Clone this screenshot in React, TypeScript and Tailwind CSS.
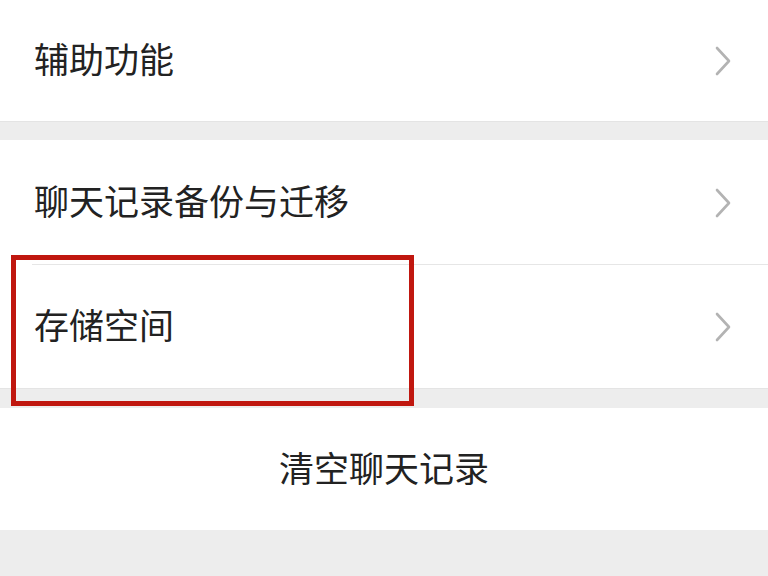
function Chevron() {
  return (
    <svg width="16" height="30" viewBox="0 0 16 30" fill="none" className="shrink-0">
      <path d="M2 2 L14 15 L2 28" stroke="#b3b3b3" strokeWidth="2.6" strokeLinecap="round" strokeLinejoin="round" />
    </svg>
  );
}

function Row({ label, h, divider }: { label: string; h: string; divider?: boolean }) {
  return (
    <div className={`relative flex items-center justify-between bg-white pl-[34px] pr-[37px] ${h}`}>
      <span className="mb-[6px] text-[35px] leading-none text-[#222]">{label}</span>
      <Chevron />
      {divider && <div className="absolute bottom-0 left-[32px] right-0 h-px bg-[#e6e6e6]" />}
    </div>
  );
}

export default function App() {
  return (
    <div
      className="relative w-[768px] h-[576px] overflow-hidden bg-[#ededed]"
      style={{ fontFamily: '"Noto Sans CJK SC", "Noto Sans", sans-serif' }}
    >
      <Row label="辅助功能" h="h-[121px]" />
      <div className="h-[19px] border-t border-[#e4e4e4]" />
      <Row label="聊天记录备份与迁移" h="h-[125px]" divider />
      <Row label="存储空间" h="h-[123px]" />
      <div className="h-[20px] border-t border-[#e4e4e4]" />
      <div className="flex h-[122px] items-center justify-center bg-white">
        <span className="mb-[6px] text-[35px] leading-none text-[#222]">清空聊天记录</span>
      </div>

      {/* highlight box */}
      <div className="absolute left-[11px] top-[255px] h-[151px] w-[403px] border-[5px] border-[#c0170f]" />
    </div>
  );
}
